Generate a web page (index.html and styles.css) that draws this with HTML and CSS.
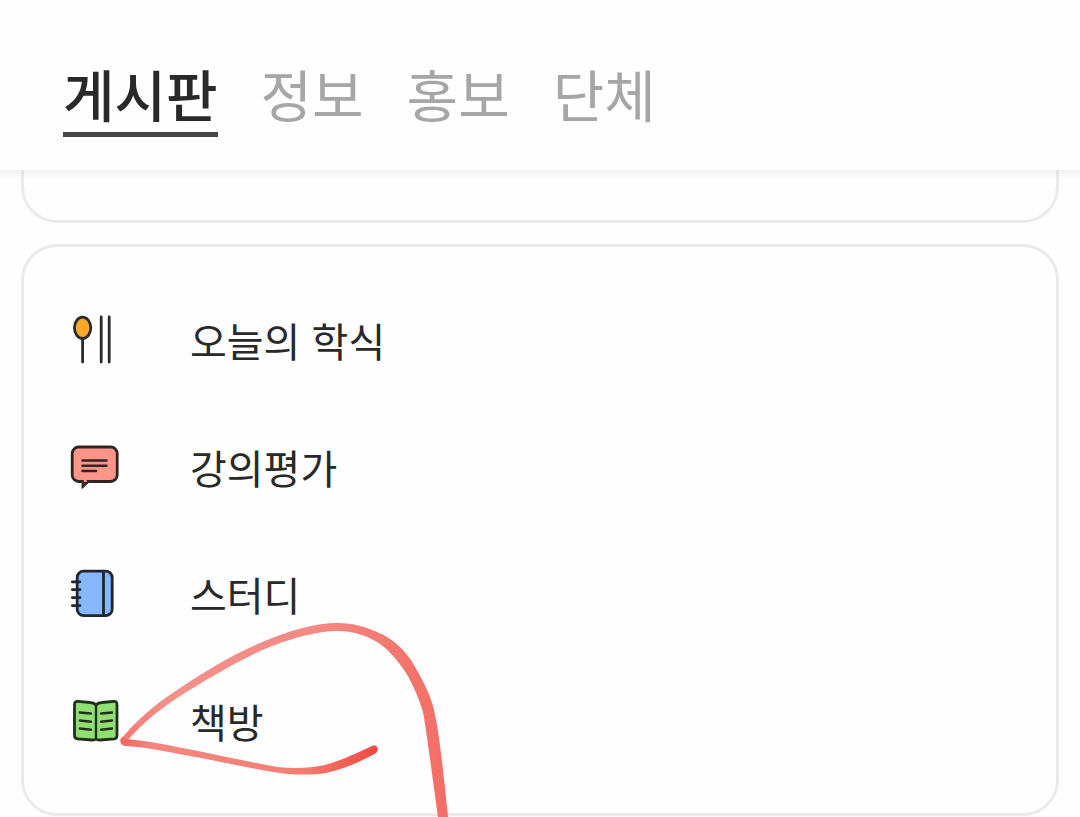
FILE: index.html
```html
<!DOCTYPE html>
<html lang="ko">
<head>
<meta charset="utf-8">
<meta name="viewport" content="width=device-width, initial-scale=1">
<title>게시판</title>
<link rel="stylesheet" href="styles.css">
</head>
<body>
<header class="header">
  <nav class="tabs">
    <a class="tab tab-active" href="#board" aria-current="page">게시판</a>
    <a class="tab" href="#info">정보</a>
    <a class="tab" href="#promo">홍보</a>
    <a class="tab" href="#group">단체</a>
  </nav>
</header>
<main class="content">
  <section class="card card-previous"></section>
  <section class="card">
    <ul class="menu">
      <li><a class="menu-item" href="#meal">
        <svg class="icon" viewBox="0 0 50 50" aria-hidden="true" fill="none" stroke="#2a2a2a" stroke-width="2.8" stroke-linecap="round">
          <path d="M12.600 24V47M31.200 2V47M39.200 2V47"/>
          <ellipse cx="12.600" cy="12.800" rx="8.200" ry="10.600" fill="#ffa726"/>
        </svg>
        <span>오늘의 학식</span></a></li>
      <li><a class="menu-item" href="#review">
        <svg class="icon" viewBox="0 0 50 50" aria-hidden="true" stroke="#302424" stroke-width="2.800" stroke-linecap="round" stroke-linejoin="round">
          <path d="M12.300 39V46L19 39.500Z" fill="#302424" stroke-width="1.500"/>
          <rect x="2.200" y="5" width="45" height="34.500" rx="6.500" fill="#ff9489"/>
          <path d="M12.500 18.500H36.500M12.500 23.800H36.500M12.500 29H26" stroke-width="2.600"/>
          <path d="M14.500 39H16" stroke="#ff9489" stroke-width="2"/>
        </svg>
        <span>강의평가</span></a></li>
      <li><a class="menu-item" href="#study">
        <svg class="icon" viewBox="0 0 50 50" aria-hidden="true" stroke="#20262e" stroke-width="2.800" stroke-linecap="round">
          <rect x="7.200" y="2.200" width="35" height="44.500" rx="6.500" fill="#86b8ff"/>
          <path d="M33.500 3V46M2.300 12.800H10M2.300 20.600H10M2.300 28.600H10M2.300 36.600H10"/>
        </svg>
        <span>스터디</span></a></li>
      <li><a class="menu-item" href="#books">
        <svg class="icon" viewBox="0 0 50 50" aria-hidden="true" fill="#8fe070" stroke="#21301d" stroke-width="2.800" stroke-linecap="round" stroke-linejoin="round">
          <path d="M26 9Q24 6.700 20 6.500L8 5.300Q4.500 5.100 4.500 8.500V39.500Q4.500 42.500 7.500 42.800L22 44Q24.500 44.200 26 43Q27.500 44.200 30 44L44.500 42.800Q47 42.500 47 39.500V8.500Q47 5.100 43.500 5.300L32 6.500Q28 6.700 26 9Z"/>
          <path d="M26 9V43M9.800 16.500L21 17.500M9.800 24.500L21 25.700M9.800 32.500L21 33.700M31 17.500L42 16.500M31 25.700L42 24.500M31 33.700L42 32.500" stroke-width="2.400"/>
        </svg>
        <span>책방</span></a></li>
    </ul>
  </section>
  <svg class="marker" viewBox="0 0 350 207" aria-hidden="true">
    <defs>
      <linearGradient id="arc" gradientUnits="userSpaceOnUse" x1="10" y1="0" x2="335" y2="0">
        <stop offset="0" stop-color="#f47a72"/><stop offset=".15" stop-color="#f3918b"/><stop offset=".6" stop-color="#f38a84"/><stop offset=".88" stop-color="#f2756d"/><stop offset="1" stop-color="#f56e66"/>
      </linearGradient>
      <linearGradient id="tail" gradientUnits="userSpaceOnUse" x1="10" y1="0" x2="268" y2="0">
        <stop offset="0" stop-color="#f2655d"/><stop offset=".12" stop-color="#f3857d"/><stop offset=".7" stop-color="#f47e75"/><stop offset="1" stop-color="#f1483e"/>
      </linearGradient>
    </defs>
    <path fill="url(#arc)" d="M11 129C25 112 44 95 67 80C92 63 122 45 150 33C180 20 205 13 228 13C243 13 256 17 267 22C284 29 296 41 304 55C312 69 320 83 324 100C329 121 333 158 338 207L328 207C323 173 318 130 313 102C309 89 303 74 296 63C287 49 278 39 267 32C255 25 243 21 228 21C205 21 178 29 150 41C122 54 92 72 67 88C46 102 31 115 17 131Z"/>
    <path fill="url(#tail)" d="M17 129C40 131 62 136 83 140C112 146 140 152 167 157C185 159 201 158 215 155C230 151 247 143 262 136C267 134 270 139 266 143C252 151 236 158 220 162C209 165 193 165 178 164C151 161 113 152 80 146C54 141 34 137 15 136C10 135 9 130 12 127Z"/>
  </svg>
</main>
</body>
</html>
```

FILE: styles.css
```css
* {
  box-sizing: border-box;
}

body {
  margin: 0;
  background: #fefefe;
  color: #292929;
  font-family: "Noto Sans CJK KR", "Noto Sans", sans-serif;
}

a {
  color: inherit;
  text-decoration: none;
}

.header {
  position: relative;
  z-index: 1;
  padding: 56px 63px 33px;
  background: #fefefe;
}

.header::after {
  content: "";
  position: absolute;
  top: 100%;
  left: 0;
  right: 0;
  height: 10px;
  background: linear-gradient(rgba(0, 0, 0, 0.05), rgba(0, 0, 0, 0));
}

.tabs {
  display: flex;
  gap: 43px;
}

.tab {
  height: 81px;
  border-bottom: 5px solid transparent;
  color: #a6a6a6;
  font-size: 56px;
  font-weight: 400;
  line-height: 74px;
}

.tab-active {
  border-color: #474747;
  color: #292929;
  font-weight: 500;
}

.content {
  position: relative;
  padding: 0 21px 1px;
}

.card {
  padding: 29px 46px;
  border: 3px solid #ebebeb;
  border-radius: 36px;
}

.card-previous {
  height: 53px;
  margin-bottom: 21px;
  padding: 0;
  border-top: 0;
  border-top-left-radius: 0;
  border-top-right-radius: 0;
}

.menu {
  margin: 0;
  padding: 0;
  list-style: none;
}

.menu-item {
  display: flex;
  align-items: center;
  gap: 70px;
  height: 127px;
  font-size: 40px;
  line-height: 60px;
}

.icon {
  width: 50px;
  height: 50px;
}

.marker {
  position: absolute;
  top: 440px;
  left: 110px;
  width: 350px;
  height: 207px;
  pointer-events: none;
}
```
